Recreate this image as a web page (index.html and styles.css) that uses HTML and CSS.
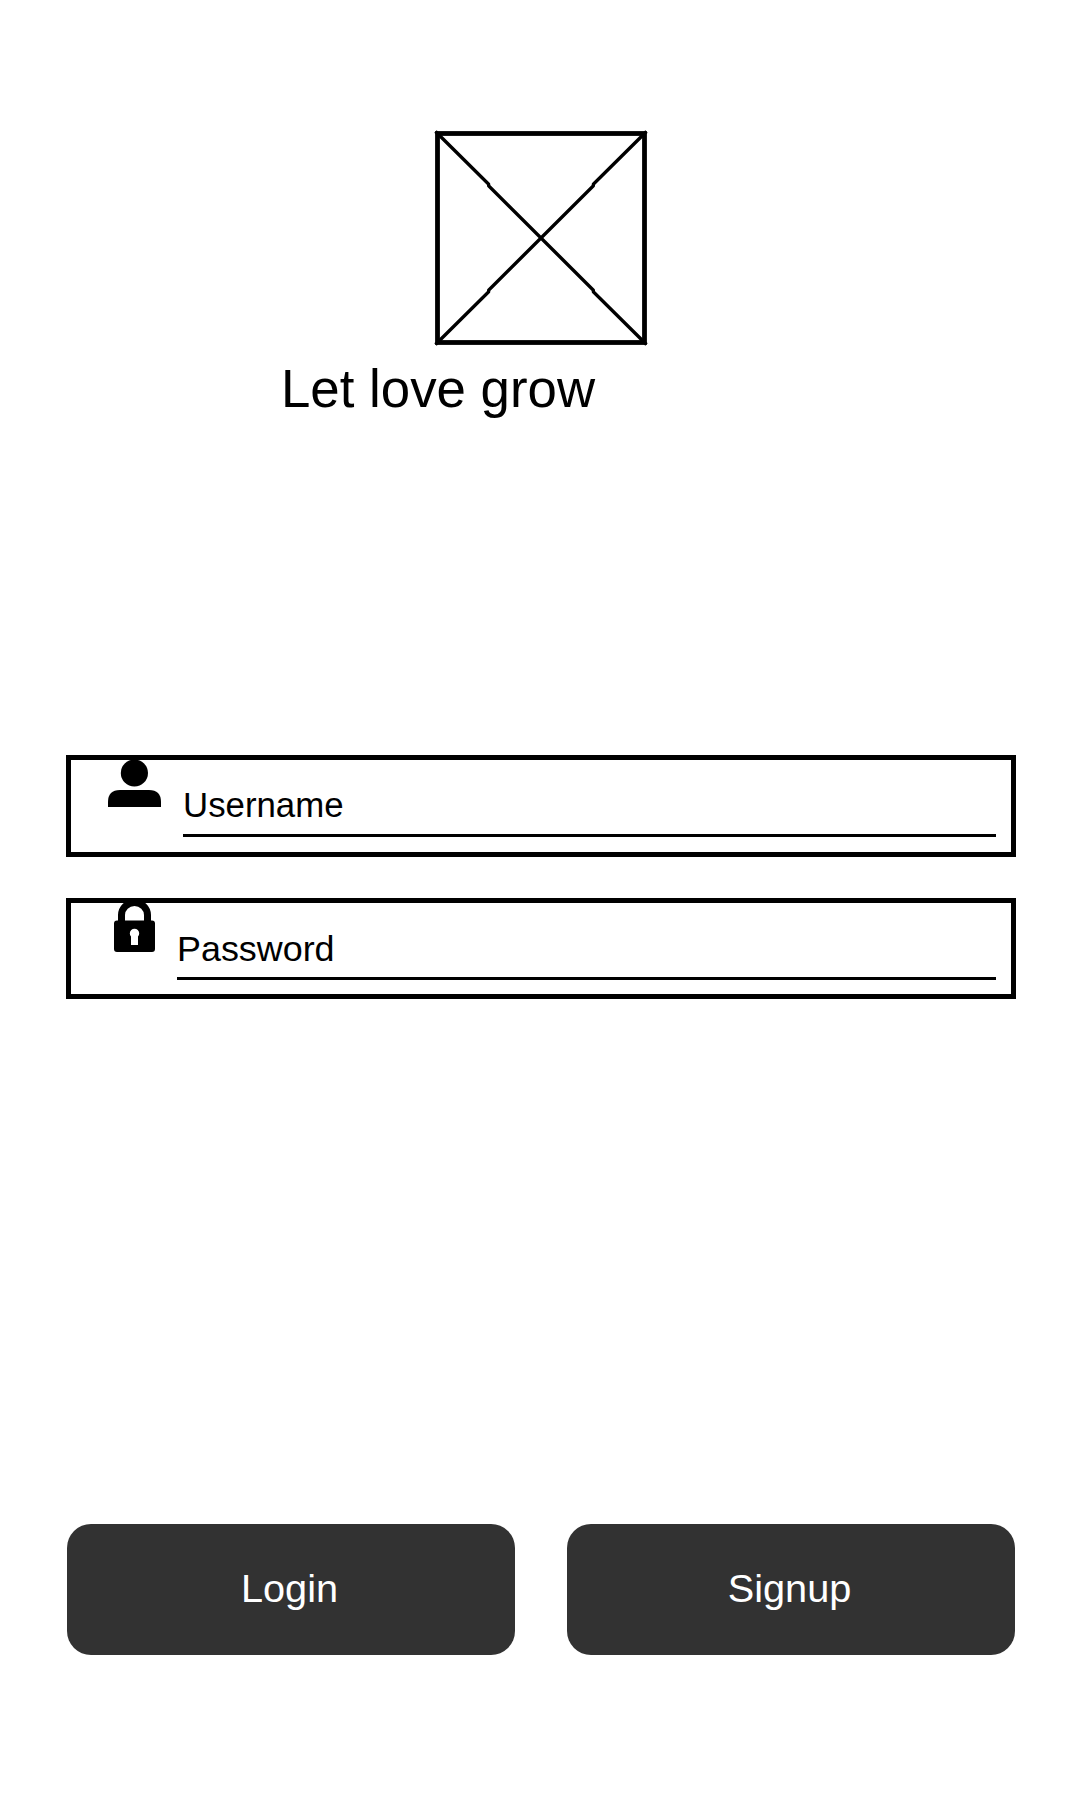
FILE: index.html
```html
<!DOCTYPE html>
<html lang="en">
<head>
<meta charset="utf-8">
<title>Let love grow</title>
<link rel="stylesheet" href="styles.css">
</head>
<body>
<main class="screen">
  <header class="brand">
    <svg class="logo" width="214" height="216" viewBox="434 130 214 216">
      <rect x="437.5" y="133.5" width="207" height="209" fill="none" stroke="#000" stroke-width="4.800"/>
      <path d="M435.500 131.500L488.500 184L488.800 186L593.200 290L593.500 292L646.500 344.500M646.500 131.500L593.500 184L593.200 186L488.800 290L488.500 292L435.500 344.500" fill="none" stroke="#000" stroke-width="3.400"/>
    </svg>
    <h1 class="tagline">Let love grow</h1>
  </header>
  <section class="fields">
    <div class="field field-user">
      <svg class="icon" width="53" height="48" viewBox="108 759 53 48">
        <circle cx="134.4" cy="773" r="13.6"/>
        <path d="M108 807V802Q108 790 120 790H149Q161 790 161 802V807Z"/>
      </svg>
      <div class="entry">Username</div>
    </div>
    <div class="field field-pass">
      <svg class="icon" width="41" height="52" viewBox="114 900 41 52">
        <path d="M121.500 923V915A13 12.500 0 0 1 147.500 915V923" fill="none" stroke="#000" stroke-width="7"/>
        <path fill-rule="evenodd" d="M117 920.500H152Q155 920.500 155 923.500V949Q155 952 152 952H117Q114 952 114 949V923.500Q114 920.500 117 920.500ZM131 945H138V936.500A4.700 4.700 0 1 0 131 936.500Z"/>
      </svg>
      <div class="entry">Password</div>
    </div>
  </section>
  <nav class="actions">
    <button class="button button-login" type="button">Login</button>
    <button class="button button-signup" type="button">Signup</button>
  </nav>
</main>
</body>
</html>
```
FILE: styles.css
```css
* {
  box-sizing: border-box;
}

body {
  margin: 0;
  background: #fff;
  color: #000;
  font-family: "Liberation Sans", Arial, sans-serif;
}

.screen {
  display: flex;
  flex-direction: column;
  height: 1800px;
  padding: 130px 64px 145px 66px;
}

.brand {
  display: flex;
  flex-direction: column;
  height: 625px;
}

.logo {
  display: block;
  margin-left: 368px;
}

.tagline {
  margin: 13px 0 0 215px;
  font-size: 52.8px;
  font-weight: 400;
  line-height: 60px;
}

.fields {
  display: flex;
  flex-direction: column;
  gap: 41px;
}

.field {
  display: flex;
  align-items: flex-start;
  gap: 22px;
  border: 5px solid #000;
}

.field-user {
  height: 102px;
  padding: 0 15px 0 37px;
  font-size: 34.8px;
}

.field-pass {
  height: 101px;
  padding: 0 15px 0 43px;
  font-size: 35.9px;
}

.icon {
  display: block;
  flex: none;
  margin-top: -1px;
}

.field-pass .icon {
  margin-top: -3px;
}

.entry {
  flex: 1;
  height: 77px;
  padding-top: 25px;
  border-bottom: 3px solid #000;
  line-height: 40px;
}

.field-pass .entry {
  padding-top: 26px;
}

.actions {
  display: grid;
  grid-template-columns: 1fr 1fr;
  gap: 52px;
  margin: auto 1px 0;
}

.button {
  height: 131px;
  padding: 0 3px 3px 0;
  border: 0;
  border-radius: 24px;
  background: #323232;
  color: #fff;
  font: 39.7px "Liberation Sans", Arial, sans-serif;
}
```
